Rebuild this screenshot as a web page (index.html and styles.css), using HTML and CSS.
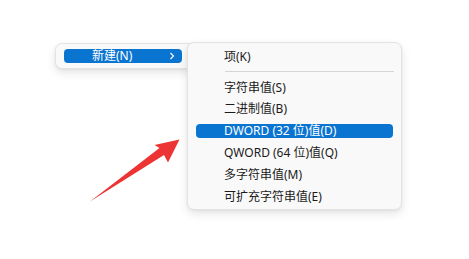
FILE: index.html
```html
<!DOCTYPE html>
<html lang="zh-CN">
<head>
<meta charset="utf-8">
<link rel="stylesheet" href="styles.css">
</head>
<body>
<div class="desk">
  <div class="menu menu-parent">
    <div class="pitem">
      <span class="plabel">新建(N)</span>
      <svg class="chev" width="6" height="8" viewBox="0 0 6 8"><path d="M1.5 1 L4.5 4 L1.5 7" fill="none" stroke="#ffffff" stroke-width="1.1"/></svg>
    </div>
  </div>
  <div class="menu menu-sub">
    <div class="item"><span class="label">项(K)</span></div>
    <div class="sep"></div>
    <div class="item"><span class="label">字符串值(S)</span></div>
    <div class="item"><span class="label">二进制值(B)</span></div>
    <div class="item"><span class="label active">DWORD (32 位)值(D)</span></div>
    <div class="item"><span class="label">QWORD (64 位)值(Q)</span></div>
    <div class="item"><span class="label">多字符串值(M)</span></div>
    <div class="item"><span class="label">可扩充字符串值(E)</span></div>
  </div>
  <svg class="arrow" width="469" height="259" viewBox="0 0 469 259">
    <polygon points="90,201.5 159.5,148 154.5,145 179.5,139.5 168,162.5 164,155" fill="#ec3434"/>
  </svg>
</div>
</body>
</html>
```
FILE: styles.css
```css
html, body {
  margin: 0;
  padding: 0;
  background: #ffffff;
}
.desk {
  position: relative;
  width: 469px;
  height: 259px;
  overflow: hidden;
  font-family: "Noto Sans", "Noto Sans CJK SC", sans-serif;
  font-size: 12px;
  color: #1b1b1b;
}
.menu {
  position: absolute;
  background: #f9f9f9;
  border: 1px solid #e3e3e3;
  border-radius: 7px;
  box-sizing: border-box;
  box-shadow: 0 4px 10px rgba(0, 0, 0, 0.10), 0 1px 3px rgba(0, 0, 0, 0.05);
}
.menu-parent {
  left: 55px;
  top: 43px;
  width: 140px;
  height: 26px;
  padding: 5px 8px;
}
.pitem {
  height: 14px;
  width: 118px;
  background: #0a74d1;
  border-radius: 4px;
  display: flex;
  align-items: center;
  justify-content: space-between;
  padding: 0 7px 0 28px;
  box-sizing: border-box;
  color: #ffffff;
}
.plabel {
  line-height: 14px;
}
.chev {
  display: block;
}
.menu-sub {
  left: 187px;
  top: 42px;
  width: 215px;
  height: 168px;
  padding: 3px 0 2px;
  display: flex;
  flex-direction: column;
}
.item {
  height: 21.8px;
  display: flex;
  align-items: center;
  flex: none;
}
.label {
  flex: 1;
  height: 14px;
  line-height: 14px;
  margin: 0 8px;
  padding-left: 28px;
  border-radius: 4px;
  white-space: nowrap;
}
.label.active {
  background: #0a74d1;
  color: #ffffff;
}
.sep {
  flex: none;
  height: 1px;
  margin: 3.5px 7px 4.5px 37px;
  background: #d6d6d6;
}
.arrow {
  position: absolute;
  left: 0;
  top: 0;
  pointer-events: none;
}
```
